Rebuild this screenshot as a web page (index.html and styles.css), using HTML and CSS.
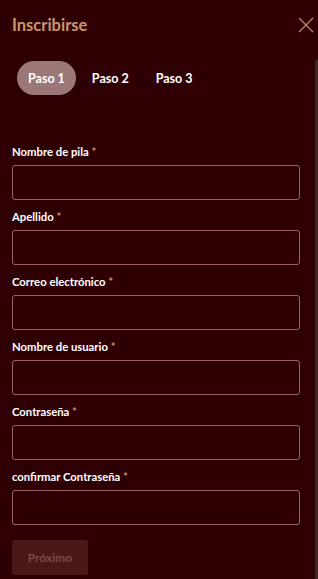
FILE: index.html
```html
<!DOCTYPE html>
<html lang="es">
<head>
    <meta charset="UTF-8">
    <meta name="viewport" content="width=device-width, initial-scale=1.0">
    <title>Inscribirse</title>
    <link rel="stylesheet" href="styles.css">
</head>
<body>
    <div class="header">
        <h1>Inscribirse</h1>
        <button class="close" aria-label="Cerrar">
            <svg width="16" height="16" viewBox="0 0 16 16">
                <path d="M1 1L15 15M15 1L1 15" stroke="#b98a64" stroke-width="1.3" fill="none"/>
            </svg>
        </button>
    </div>
    <div class="content">
        <div class="tabs">
            <span class="tab active">Paso 1</span>
            <span class="tab">Paso 2</span>
            <span class="tab">Paso 3</span>
        </div>
        <form id="form">
            <div class="field">
                <label for="fname">Nombre de pila <span class="req">*</span></label>
                <input type="text" id="fname">
            </div>
            <div class="field">
                <label for="lname">Apellido <span class="req">*</span></label>
                <input type="text" id="lname">
            </div>
            <div class="field">
                <label for="email">Correo electrónico <span class="req">*</span></label>
                <input type="text" id="email">
            </div>
            <div class="field">
                <label for="user">Nombre de usuario <span class="req">*</span></label>
                <input type="text" id="user">
            </div>
            <div class="field">
                <label for="pass">Contraseña <span class="req">*</span></label>
                <input type="password" id="pass">
            </div>
            <div class="field">
                <label for="cpass">confirmar Contraseña <span class="req">*</span></label>
                <input type="password" id="cpass">
            </div>
            <button type="submit" class="next" disabled>Próximo</button>
        </form>
    </div>
</body>
</html>
```

FILE: styles.css
```css
body{
    margin: 0;
    background: #2f0003;
    font-family: Lato, 'Open Sans', sans-serif;
    height: 579px;
    overflow: hidden;
}
.header{
    display: flex;
    justify-content: space-between;
    align-items: center;
    height: 50px;
    padding: 0 4px 0 12px;
}
h1{
    margin: 0;
    font-size: 16.5px;
    font-weight: 700;
    color: #c9966b;
}
.close{
    background: none;
    border: 0;
    padding: 0;
    width: 16px;
    height: 16px;
}
.content{
    margin-top: 10px;
    border-right: 3px solid #3b2621;
    height: 519px;
    padding: 1px 15px 0 12px;
}
.tabs{
    display: flex;
    padding-left: 5px;
    gap: 5px;
}
.tab{
    display: flex;
    align-items: center;
    height: 34px;
    padding: 0 11px;
    color: #fff;
    font-size: 12.5px;
    font-weight: 700;
}
.tab.active{
    background: #9b7777;
    border-radius: 17px;
}
#form{
    margin-top: 50px;
}
.field{
    display: flex;
    flex-direction: column;
    margin-bottom: 10px;
}
label{
    color: #fff;
    font-size: 11.3px;
    font-weight: 700;
    line-height: 14px;
    margin-bottom: 6px;
}
.req{
    color: #d08a5c;
}
.field input{
    height: 35px;
    box-sizing: border-box;
    border: 1px solid #9c6464;
    border-radius: 3px;
    background: transparent;
    color: #fff;
}
.field input:focus{
    outline: 0;
}
.next{
    margin-top: 5px;
    width: 76px;
    height: 35px;
    border: 0;
    border-radius: 3px;
    background: #4b1717;
    color: #7a4a4a;
    font-family: inherit;
    font-size: 12px;
    font-weight: 700;
}
```
